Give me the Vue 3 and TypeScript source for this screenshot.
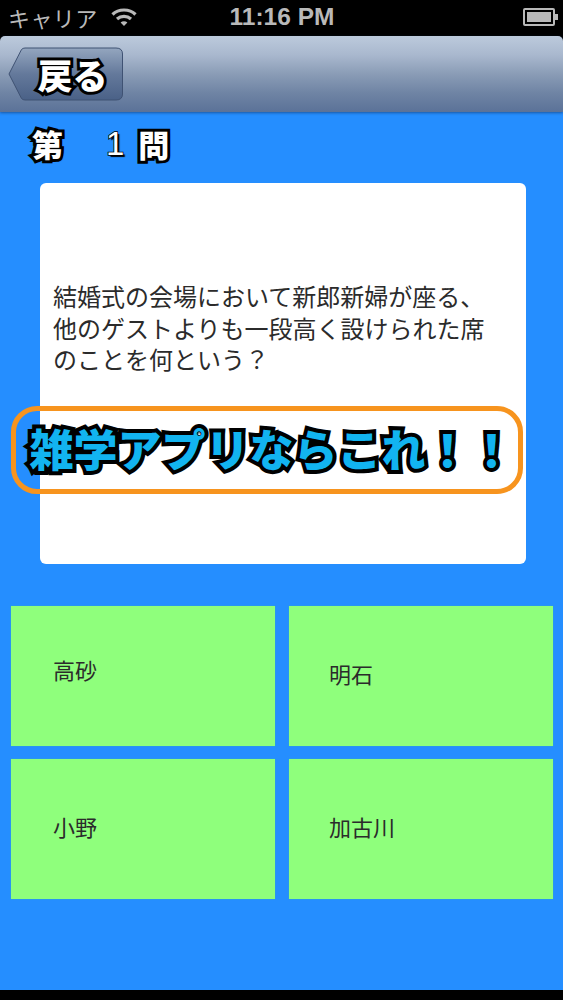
<script setup lang="ts">
const question: string = '結婚式の会場において新郎新婦が座る、\n他のゲストよりも一段高く設けられた席\nのことを何という？'
interface Answer { label: string; cls: string }
const answers: Answer[] = [
  { label: '高砂', cls: 'a-raised' },
  { label: '明石', cls: 'a-right' },
  { label: '小野', cls: '' },
  { label: '加古川', cls: 'a-right' },
]
</script>

<template>
  <div class="screen">
    <header class="status">
      <div class="status-left">
        <span class="carrier">キャリア</span>
        <svg class="wifi" width="26" height="20" viewBox="0 0 26 20" fill="none" stroke="#b9b9b9" stroke-width="3.2">
          <path d="M1.5 7.5C7.5 1.5 18.5 1.5 24.5 7.5" />
          <path d="M6 12C10 8.4 16 8.4 20 12" />
          <path d="M13 19L9.6 15.4C11.5 13.8 14.5 13.8 16.4 15.4Z" fill="#b9b9b9" stroke="none" />
        </svg>
      </div>
      <span class="time">11:16 PM</span>
      <div class="battery"><div class="battery-fill"></div></div>
    </header>

    <nav class="navbar">
      <div class="back">
        <svg class="back-shape" width="116" height="54" viewBox="0 0 116 54">
          <defs>
            <linearGradient id="backGrad" x1="0" y1="0" x2="0" y2="1">
              <stop offset="0" stop-color="#94a6bf" />
              <stop offset="0.5" stop-color="#64799b" />
              <stop offset="1" stop-color="#4a6187" />
            </linearGradient>
          </defs>
          <path d="M17 1H108Q114.500 1 114.500 7V47Q114.500 53 108 53H17Q15 53 13.500 51.500L1 27L13.500 2.500Q15 1 17 1Z" fill="url(#backGrad)" stroke="#3f5273" stroke-width="1" />
        </svg>
        <span class="back-label">戻る</span>
      </div>
    </nav>

    <main class="main">
      <h1 class="title"><span>第</span><span class="num">1</span><span>問</span></h1>
      <section class="card">
        <p class="question">{{ question }}</p>
      </section>
      <section class="answers">
        <button v-for="a in answers" :key="a.label" class="answer" :class="a.cls">{{ a.label }}</button>
      </section>
      <div class="banner"><span class="banner-text">雑学アプリならこれ！！</span></div>
    </main>
    <div class="bottom"></div>
  </div>
</template>

<style>
html, body { margin: 0; background: #000; }
</style>

<style scoped>
.screen {
  position: relative;
  width: 563px;
  height: 1000px;
  display: flex;
  flex-direction: column;
  overflow: hidden;
  background: #000;
  font-family: "Noto Sans CJK JP", "Liberation Sans", sans-serif;
}
.status {
  height: 36px;
  flex: none;
  display: grid;
  grid-template-columns: 1fr auto 1fr;
  align-items: center;
  padding: 0 7px 2px 8px;
  box-sizing: border-box;
  color: #b9b9b9;
}
.status-left { display: flex; align-items: center; gap: 13px; }
.carrier { font-size: 22px; line-height: 30px; letter-spacing: 0.4px; }
.time {
  font-family: "Liberation Sans", Arial, sans-serif;
  font-weight: 700;
  font-size: 24.500px;
  line-height: 30px;
}
.battery {
  justify-self: end;
  position: relative;
  width: 32px;
  height: 18px;
  border: 2px solid #b9b9b9;
  border-radius: 2px;
  padding: 2px;
  box-sizing: border-box;
  margin-right: 1px;
}
.battery::after {
  content: "";
  position: absolute;
  right: -5px;
  top: 4px;
  width: 3px;
  height: 6px;
  background: #b9b9b9;
}
.battery-fill { width: 100%; height: 100%; background: #b9b9b9; }
.navbar {
  height: 76px;
  flex: none;
  border-radius: 5px 5px 0 0;
  background: linear-gradient(#bccadc 0%, #a9b8ce 25%, #8a9cb6 50%, #6f84a4 75%, #5b7298 100%);
  box-shadow: 0 1px 3px rgba(20, 50, 100, 0.6);
  position: relative;
  z-index: 1;
  display: flex;
  align-items: center;
  padding-left: 8px;
  padding-bottom: 1px;
  box-sizing: border-box;
}
.back { position: relative; width: 116px; height: 54px; display: flex; align-items: center; justify-content: center; }
.back-shape { position: absolute; inset: 0; }
.back-label {
  position: relative;
  margin-left: 13px;
  font-size: 35px;
  line-height: 40px;
  font-weight: 900;
  color: #fff;
  -webkit-text-stroke: 6px #000;
  paint-order: stroke fill;
}
.main {
  position: relative;
  flex: 1;
  background: #258eff;
  display: flex;
  flex-direction: column;
  padding: 12px 10px 0 11px;
  box-sizing: border-box;
}
.title {
  margin: 0 0 0 21px;
  height: 40px;
  display: flex;
  align-items: center;
  font-size: 31px;
  line-height: 40px;
  font-weight: 900;
  color: #fff;
  -webkit-text-stroke: 6px #000;
  paint-order: stroke fill;
  text-shadow: 2px 2px 1px #000;
}
.title .num {
  font-family: "Liberation Sans", Arial, sans-serif;
  font-weight: 400;
  font-size: 33px;
  margin: 0 14px 0 43px;
  -webkit-text-stroke: 1.500px #000;
}
.card {
  margin: 19px 27px 0 29px;
  height: 381px;
  box-sizing: border-box;
  background: #fff;
  border-radius: 6px;
  padding: 97px 14px 0 13px;
  display: flex;
  flex-direction: column;
}
.question {
  margin: 0;
  font-size: 24px;
  line-height: 31.500px;
  color: #2b2b2b;
  white-space: pre-line;
}
.answers {
  margin-top: 42px;
  display: grid;
  grid-template-columns: 264px 264px;
  grid-auto-rows: 140px;
  column-gap: 14px;
  row-gap: 13px;
}
.answer {
  border: 0;
  background: #8fff7c;
  border-radius: 0;
  padding: 0 0 6px 42px;
  margin: 0;
  text-align: left;
  font-family: inherit;
  font-size: 22px;
  color: #2b2b2b;
  box-shadow: 0 0 1px #3fbf9f;
}
.a-right { padding-left: 40px; }
.a-raised { padding-bottom: 14px; }
.banner {
  position: absolute;
  left: 11px;
  top: 294px;
  width: 512px;
  height: 88px;
  box-sizing: border-box;
  border: 5.500px solid #f7941e;
  border-radius: 26px;
  padding: 0 0 4px 9px;
  display: flex;
  align-items: center;
  justify-content: center;
}
.banner-text {
  font-size: 44px;
  line-height: 60px;
  font-weight: 900;
  color: #12b4f0;
  white-space: nowrap;
  -webkit-text-stroke: 8px #000;
  paint-order: stroke fill;
  text-shadow: 1px 2px 2px rgba(0, 0, 0, 0.5);
}
.bottom { height: 10px; flex: none; background: #000; }
</style>
